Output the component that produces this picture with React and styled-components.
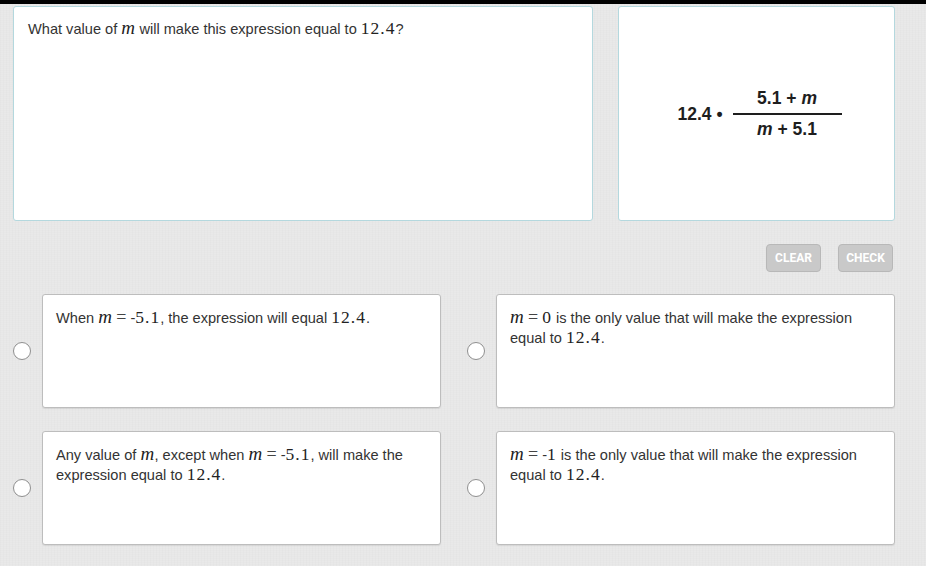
import React from "react";
import styled, { createGlobalStyle } from "styled-components";

const GlobalStyle = createGlobalStyle`
  html, body {
    margin: 0;
    padding: 0;
  }
  body {
    background: #e8e8e8;
    font-family: Arial, "Liberation Sans", sans-serif;
    color: #333;
  }
`;

const Page = styled.div`
  width: 926px;
  height: 566px;
  box-sizing: border-box;
  border-top: 4px solid #000;
  padding: 2px 32px 0 13px;
  background-color: #e7e7e7;
  background-image: repeating-linear-gradient(
      0deg,
      rgba(255, 255, 255, 0.08) 0 1px,
      transparent 1px 2px
    ),
    repeating-linear-gradient(
      90deg,
      rgba(0, 0, 0, 0.012) 0 1px,
      transparent 1px 3px
    );
  display: flex;
  flex-direction: column;
`;

const TopRow = styled.div`
  display: grid;
  grid-template-columns: 580px 277px;
  gap: 25px;
  height: 215px;
`;

const Panel = styled.div`
  background: #fff;
  border: 1px solid #b4d8de;
  border-radius: 3px;
  box-sizing: border-box;
`;

const Question = styled(Panel)`
  padding: 11px 14px;
  font-size: 14.6px;
  line-height: 20px;
`;

const ExpressionPanel = styled(Panel)`
  display: flex;
  align-items: center;
  justify-content: center;
  padding-left: 6px;
`;

const Expr = styled.div`
  display: flex;
  align-items: center;
  font-weight: bold;
  font-size: 17.5px;
  color: #1e1e1e;
`;

const Lead = styled.span`
  margin-right: 10px;
  margin-top: 2px;
`;

const Fraction = styled.div`
  display: flex;
  flex-direction: column;
  align-items: center;
  width: 109px;
`;

const Num = styled.span`
  padding-bottom: 4px;
`;

const Den = styled.span`
  border-top: 2px solid #1e1e1e;
  width: 100%;
  text-align: center;
  padding-top: 4px;
`;

const Var = styled.i``;

const M = styled.span`
  font-family: "Liberation Serif", "DejaVu Serif", serif;
  font-style: ${(p) => (p.$italic ? "italic" : "normal")};
  font-size: ${(p) => (p.$italic ? "19px" : "17.5px")};
  letter-spacing: ${(p) => (p.$italic ? "0.3px" : "1px")};
  line-height: 1;
  color: #222;
`;

const Op = styled.span`
  font-family: "Liberation Serif", "DejaVu Serif", serif;
  font-size: 18px;
  line-height: 1;
  color: #444;
  margin: 0 4px;
`;

const Actions = styled.div`
  display: flex;
  justify-content: flex-end;
  gap: 17px;
  margin: 23px 1px 0 0;
  height: 28px;
`;

const Button = styled.button`
  width: 55px;
  height: 28px;
  background: #c9c9c9;
  border: 1px solid #b8b8b8;
  border-radius: 4px;
  color: #fff;
  font-family: Roboto, Arial, sans-serif;
  font-weight: bold;
  font-size: 12px;
  padding: 0;
`;

const Answers = styled.div`
  margin-top: 22px;
  display: grid;
  grid-template-columns: 428px 428px;
  column-gap: 26px;
  row-gap: 23px;
`;

const Option = styled.label`
  display: flex;
  align-items: center;
  gap: 11px;
`;

const Radio = styled.span`
  flex: none;
  width: 16px;
  height: 16px;
  border: 1px solid #8f8f8f;
  border-radius: 50%;
  background: #fff;
`;

const Card = styled.div`
  flex: 1;
  height: 114px;
  box-sizing: border-box;
  background: #fff;
  border: 1px solid #bdbdbd;
  border-radius: 3px;
  box-shadow: 0 1px 1px rgba(0, 0, 0, 0.08);
  padding: 12px 13px;
  font-size: 14.6px;
  line-height: 20px;
  color: #333;
`;

const options = [
  <>
    When <M $italic>m</M><Op>=</Op>-<M>5.1</M>, the expression will equal{" "}
    <M>12.4</M>.
  </>,
  <>
    <M $italic>m</M><Op>=</Op><M>0</M> is the only value that will make the
    expression equal to <M>12.4</M>.
  </>,
  <>
    Any value of <M $italic>m</M>, except when <M $italic>m</M><Op>=</Op>-
    <M>5.1</M>, will make the expression equal to <M>12.4</M>.
  </>,
  <>
    <M $italic>m</M><Op>=</Op>-<M>1</M> is the only value that will make the
    expression equal to <M>12.4</M>.
  </>,
];

export default function App() {
  return (
    <>
      <GlobalStyle />
      <Page>
        <TopRow>
          <Question>
            What value of <M $italic>m</M> will make this expression equal to{" "}
            <M>12.4</M>?
          </Question>
          <ExpressionPanel>
            <Expr>
              <Lead>12.4 •</Lead>
              <Fraction>
                <Num>
                  5.1 + <Var>m</Var>
                </Num>
                <Den>
                  <Var>m</Var> + 5.1
                </Den>
              </Fraction>
            </Expr>
          </ExpressionPanel>
        </TopRow>
        <Actions>
          <Button>CLEAR</Button>
          <Button>CHECK</Button>
        </Actions>
        <Answers>
          {options.map((text, i) => (
            <Option key={i}>
              <Radio />
              <Card>{text}</Card>
            </Option>
          ))}
        </Answers>
      </Page>
    </>
  );
}
